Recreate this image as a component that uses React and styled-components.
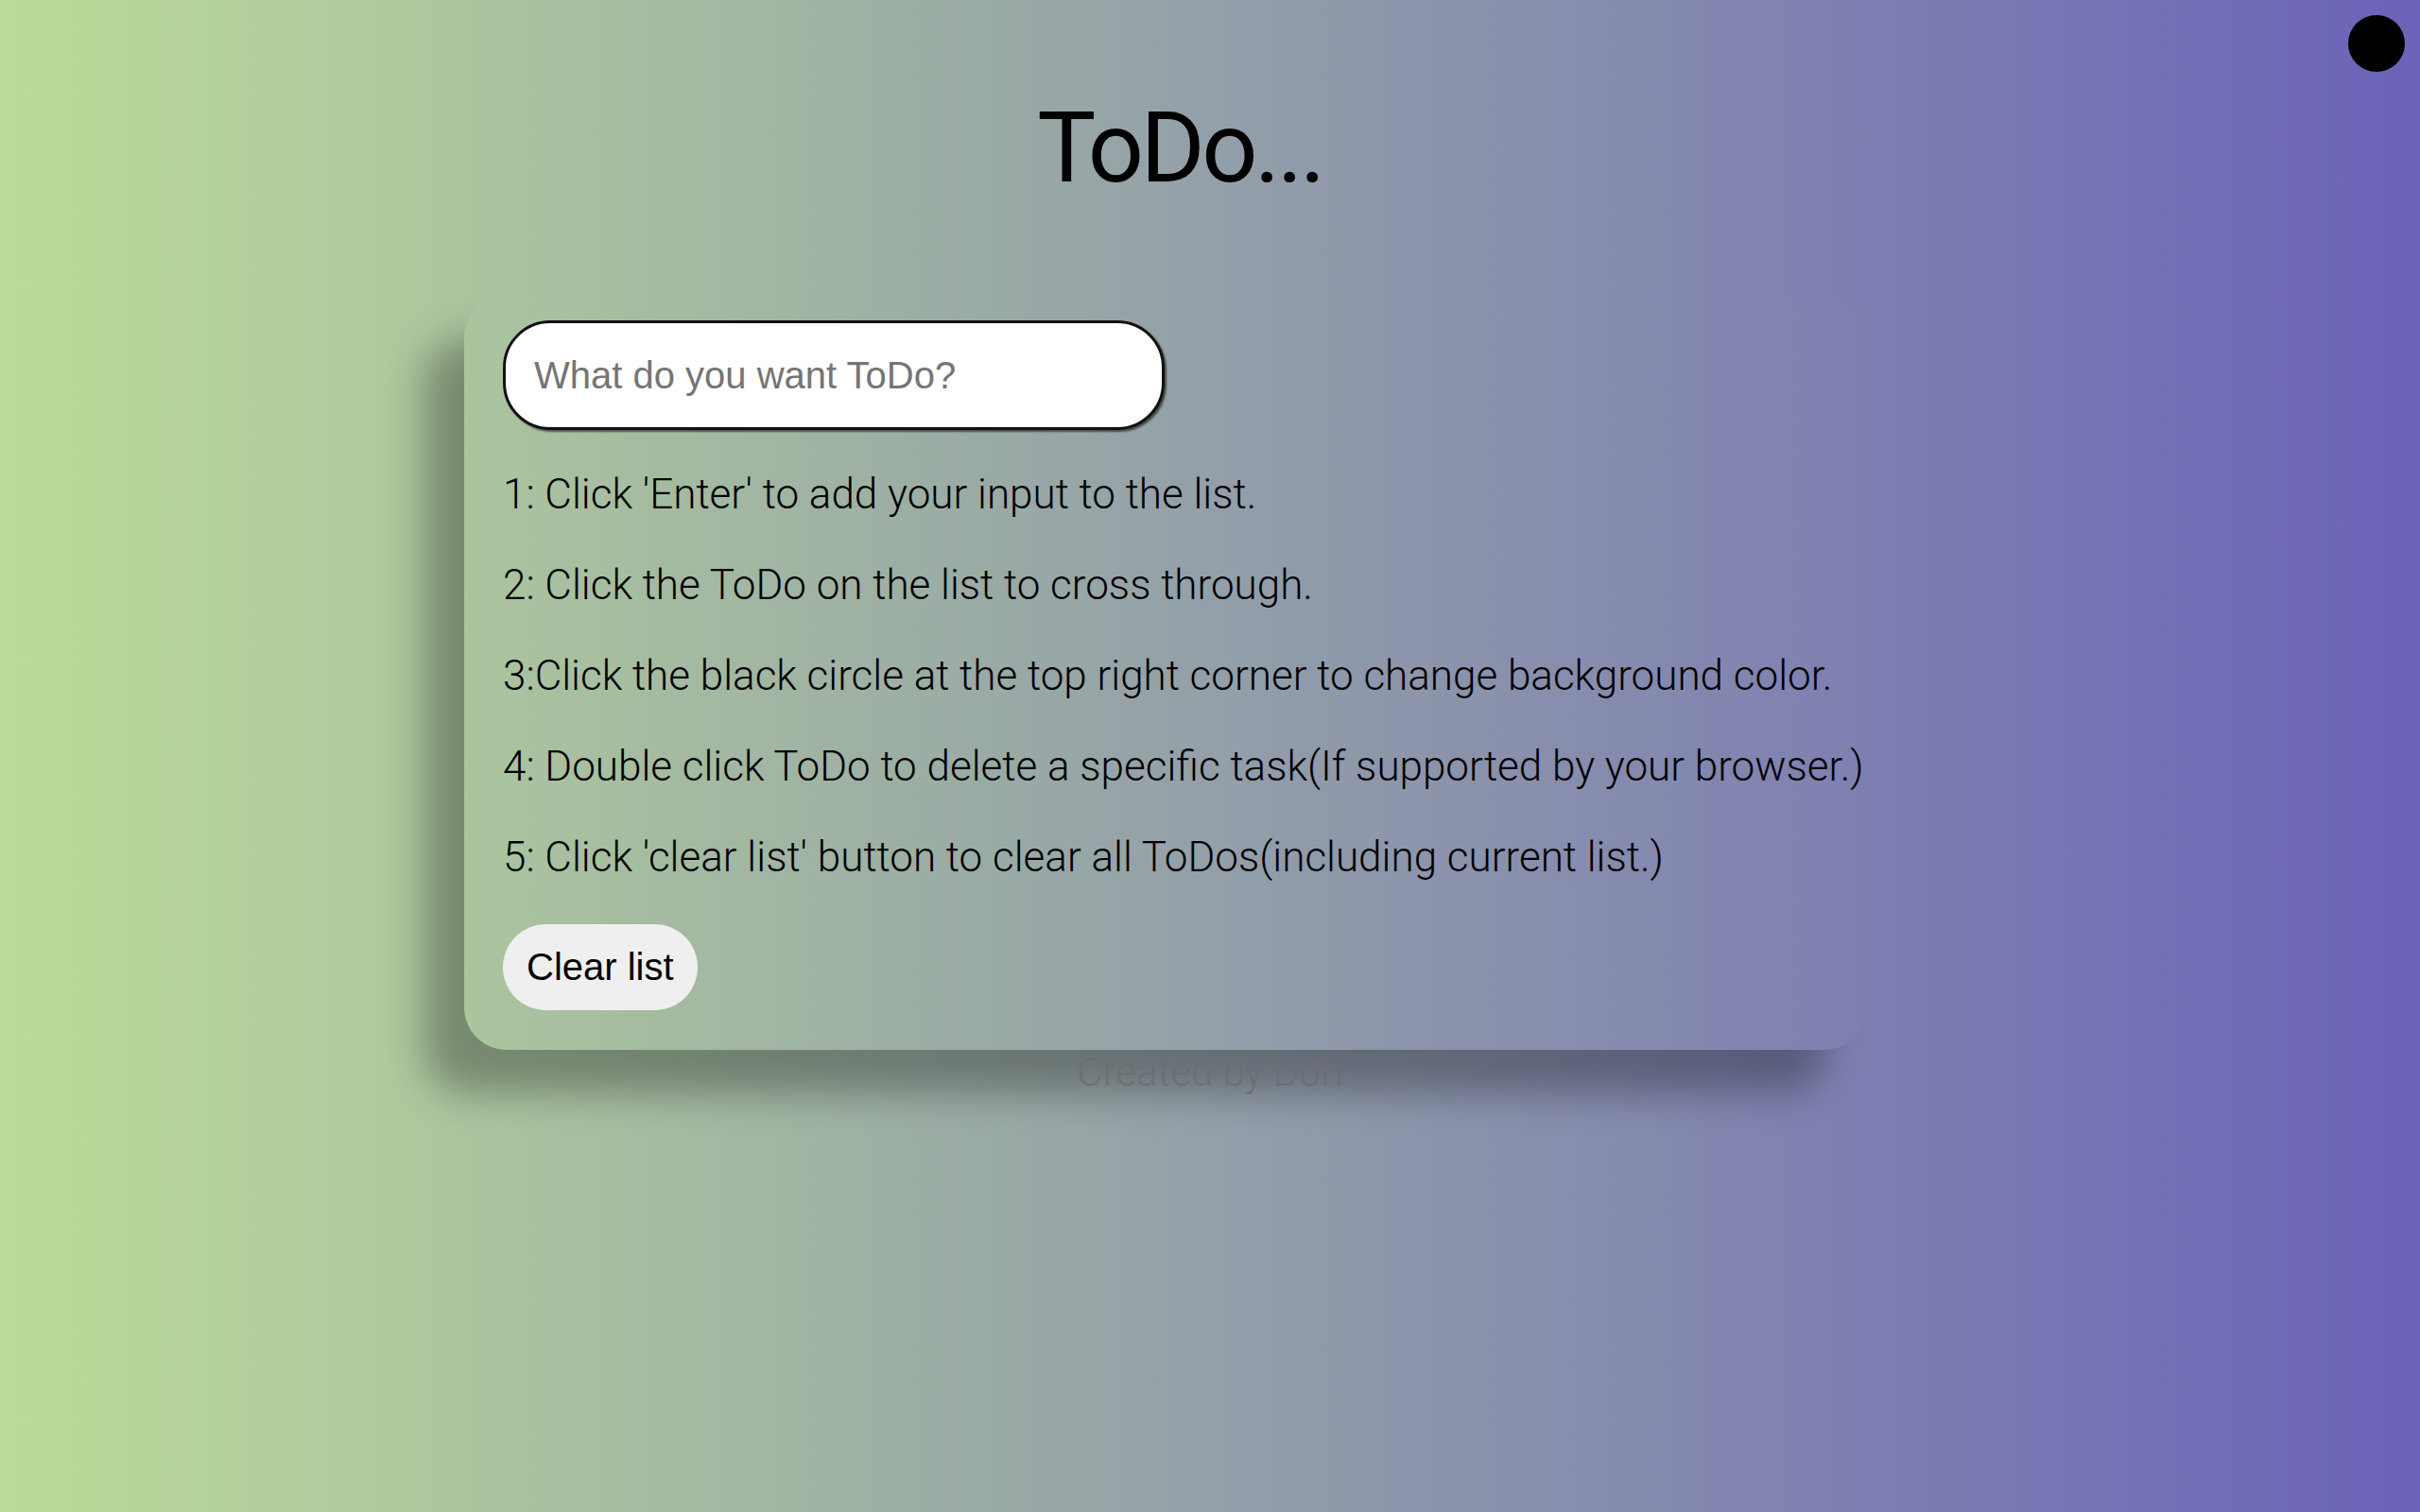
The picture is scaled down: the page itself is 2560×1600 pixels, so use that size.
import React, { useState } from "react";
import styled, { createGlobalStyle } from "styled-components";

const GlobalStyle = createGlobalStyle`
  html, body {
    margin: 0;
    padding: 0;
  }
  body {
    min-height: 100vh;
    background: linear-gradient(to right, #bbdc98, #6b63b9);
    font-family: Roboto, "Noto Sans", sans-serif;
  }
`;

const Page = styled.div`
  position: relative;
  min-height: 1600px;
  box-sizing: border-box;
  padding-top: 96px;
  display: flex;
  flex-direction: column;
`;

const ColorDot = styled.button`
  position: absolute;
  top: 16px;
  right: 16px;
  width: 60px;
  height: 60px;
  border-radius: 50%;
  border: none;
  padding: 0;
  background: #000;
  cursor: pointer;
`;

const Title = styled.h1`
  margin: 0;
  padding-right: 64px;
  text-align: center;
  font-family: Roboto, sans-serif;
  font-weight: 400;
  font-size: 104px;
  letter-spacing: -3.5px;
  line-height: 122px;
  color: #000;
`;

const Card = styled.main`
  margin: 95px 0 0 491px;
  width: 1484px;
  box-sizing: border-box;
  padding: 26px 20px 42px 41px;
  border-radius: 45px;
  background: rgba(255, 255, 255, 0.006);
  box-shadow: -42px 46px 40px rgba(0, 0, 0, 0.3);
  display: flex;
  flex-direction: column;
  align-items: flex-start;
`;

const TaskInput = styled.input`
  width: 700px;
  height: 116px;
  box-sizing: border-box;
  border: 3px solid #111;
  border-radius: 50px;
  padding: 0 30px;
  background: #fff;
  font-family: "Liberation Sans", Arial, sans-serif;
  font-size: 40px;
  color: #000;
  outline: none;
  box-shadow: 2px 2px 2px rgba(0, 0, 0, 0.55);
  &::placeholder {
    color: #757575;
  }
`;

const Steps = styled.div`
  margin-top: 42px;
  display: flex;
  flex-direction: column;
  gap: 44px;
`;

const Step = styled.p`
  margin: 0;
  white-space: nowrap;
  font-family: Roboto, sans-serif;
  font-weight: 300;
  font-size: 44px;
  line-height: 52px;
  color: #000;
`;

const ClearButton = styled.button`
  margin-top: 45px;
  border: none;
  border-radius: 46px;
  background: #efefef;
  padding: 22px 25px 23px;
  font-family: "Liberation Sans", Arial, sans-serif;
  font-size: 40px;
  line-height: 46px;
  color: #000;
  cursor: pointer;
`;

const Footer = styled.footer`
  text-align: center;
  font-family: Roboto, sans-serif;
  font-weight: 300;
  font-size: 42px;
  line-height: 48px;
  color: #6e6e74;
`;

const steps = [
  "1: Click 'Enter' to add your input to the list.",
  "2: Click the ToDo on the list to cross through.",
  "3:Click the black circle at the top right corner to change background color.",
  "4: Double click ToDo to delete a specific task(If supported by your browser.)",
  "5: Click 'clear list' button to clear all ToDos(including current list.)",
];

export default function App() {
  const [value, setValue] = useState("");
  return (
    <>
      <GlobalStyle />
      <Page>
        <ColorDot aria-label="Change background color" />
        <Title>ToDo...</Title>
        <Card>
          <TaskInput
            placeholder="What do you want ToDo?"
            value={value}
            onChange={(e) => setValue(e.target.value)}
          />
          <Steps>
            {steps.map((s) => (
              <Step key={s}>{s}</Step>
            ))}
          </Steps>
          <ClearButton>Clear list</ClearButton>
        </Card>
        <Footer>Created by D0n</Footer>
      </Page>
    </>
  );
}
